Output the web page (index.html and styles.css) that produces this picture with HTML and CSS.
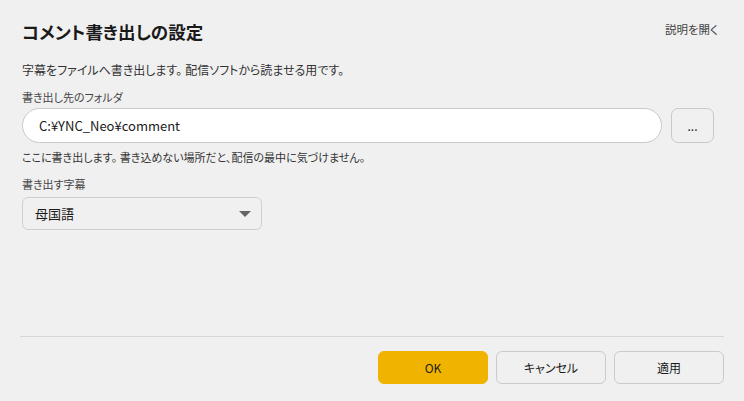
FILE: index.html
```html
<!DOCTYPE html>
<html lang="ja">
<head>
<meta charset="utf-8">
<title>コメント書き出しの設定</title>
<link rel="stylesheet" href="styles.css">
</head>
<body>
<div class="dialog">
  <header class="dialog-head">
    <h1 class="dialog-title">コメント書き出しの設定</h1>
    <a class="help-link" href="#">説明を開く</a>
  </header>

  <p class="lead">字幕をファイルへ書き出します。<span class="gap"></span>配信ソフトから読ませる用です。</p>

  <label class="field-label" for="folder">書き出し先のフォルダ</label>
  <div class="folder-row">
    <input class="text-input" id="folder" type="text" value="C:¥YNC_Neo¥comment">
    <button class="browse-btn" type="button">...</button>
  </div>
  <p class="hint">ここに書き出します。<span class="gap"></span>書き込めない場所だと、配信の最中に気づけません。</p>

  <label class="field-label field-label--second">書き出す字幕</label>
  <div class="select">
    <span class="select-value">母国語</span>
    <svg class="select-caret" width="12" height="6" viewBox="0 0 12 6"><path d="M0 0h12L6 6z" fill="#666"/></svg>
  </div>

  <div class="spacer"></div>

  <hr class="divider">
  <footer class="actions">
    <button class="btn btn-primary" type="button">OK</button>
    <button class="btn" type="button">キャンセル</button>
    <button class="btn" type="button">適用</button>
  </footer>
</div>
</body>
</html>
```

FILE: styles.css
```css
* { box-sizing: border-box; }

html, body {
  margin: 0;
  height: 100%;
  background: #f0f0f0;
  font-family: "Noto Sans CJK JP", "Noto Sans", sans-serif;
  font-feature-settings: "palt";
  color: #1a1a1a;
}

.dialog {
  height: 401px;
  display: flex;
  flex-direction: column;
  padding: 20px 20px 17px 22px;
}

.dialog-head {
  display: flex;
  justify-content: space-between;
  align-items: flex-start;
}

.dialog-title {
  margin: 0;
  font-size: 17.5px;
  line-height: 24px;
  font-weight: 700;
  color: #1a1a1a;
}

.help-link {
  font-size: 11.5px;
  line-height: 16px;
  margin-top: 1px;
  margin-right: 6px;
  color: #444;
  text-decoration: none;
}

/* keeps a little room after 。 that palt would otherwise tighten */
.gap {
  display: inline-block;
  width: 0.25em;
}

.lead {
  margin: 17px 0 0;
  font-size: 12px;
  line-height: 18px;
  color: #333;
}

.field-label {
  display: block;
  margin-top: 10px;
  font-size: 11px;
  line-height: 16px;
  color: #444;
}

.field-label--second { margin-top: 11px; }

.folder-row {
  display: flex;
  gap: 9px;
  margin-top: 3px;
  padding-right: 10px;
}

.text-input {
  flex: 1;
  height: 35px;
  padding: 0 16px;
  border: 1px solid #c9c9c9;
  border-radius: 18px;
  background: #fff;
  font: inherit;
  font-size: 13px;
  color: #1a1a1a;
  outline: none;
}

.browse-btn {
  width: 43px;
  height: 35px;
  border: 1px solid #c9c9c9;
  border-radius: 7px;
  background: #f0f0f0;
  font: inherit;
  font-size: 12px;
  color: #222;
  padding: 0;
}

.hint {
  margin: 6px 0 0;
  font-size: 11px;
  line-height: 16px;
  color: #333;
}

.select {
  display: flex;
  align-items: center;
  justify-content: space-between;
  width: 240px;
  height: 33px;
  margin-top: 5px;
  padding: 0 10px 0 12px;
  border: 1px solid #cfcfcf;
  border-radius: 6px;
  background: #f0f0f0;
  font-size: 13px;
  color: #1a1a1a;
}

.spacer { flex: 1; }

.divider {
  margin: 0 0 0 -2px;
  border: 0;
  border-top: 1px solid #d6d6d6;
  height: 0;
}

.actions {
  display: flex;
  justify-content: flex-end;
  gap: 8px;
  margin-top: 14px;
}

.btn {
  width: 110px;
  height: 33px;
  border: 1px solid #cbcbcb;
  border-radius: 6px;
  background: #f0f0f0;
  font: inherit;
  font-size: 12px;
  color: #1a1a1a;
  padding: 0;
}

.btn-primary {
  background: #f0b400;
  border-color: #f0b400;
}
```
